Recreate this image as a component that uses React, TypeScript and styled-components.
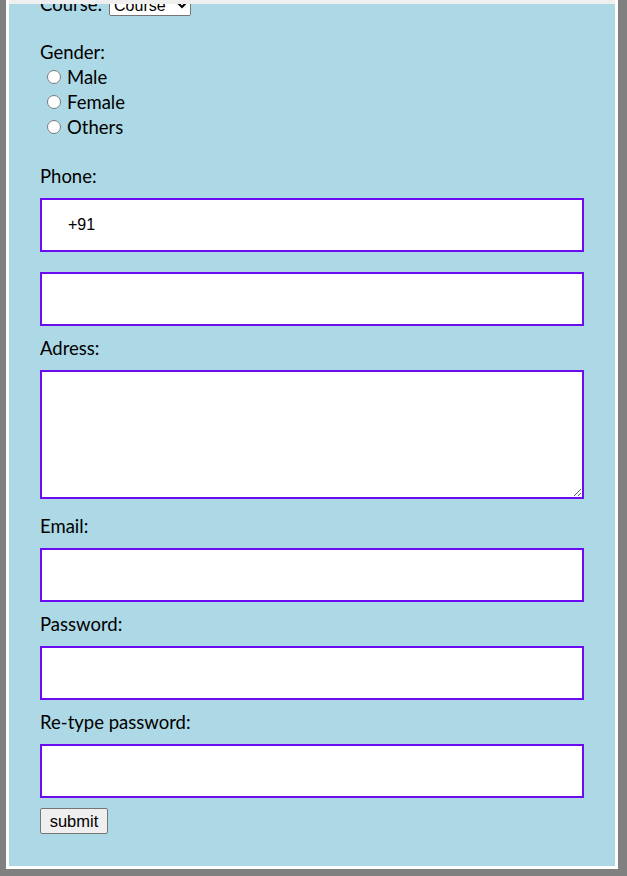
import React from "react";
import styled, { createGlobalStyle } from "styled-components";

const GlobalStyle = createGlobalStyle`
  html, body {
    margin: 0;
    padding: 0;
  }
  body {
    background: #808080;
    font-family: "Lato", "Noto Sans", sans-serif;
    overflow: hidden;
  }
`;

const Page = styled.div`
  padding: 0 9px 7px 6px;
`;

const TopShade = styled.div`
  position: fixed;
  top: 0;
  left: 9px;
  width: 606px;
  height: 4px;
  background: #efefef;
`;

const Card = styled.form`
  margin-top: -11px;
  background: #add8e6;
  border: 3px solid #ffffff;
  padding: 0 31px 32px 31px;
  display: flex;
  flex-direction: column;
  align-items: flex-start;
  color: #000;
`;

const Line = styled.div<{ $top?: number }>`
  font-size: 18.5px;
  line-height: 24px;
  height: 24px;
  margin-top: ${(p) => p.$top ?? 0}px;
  white-space: nowrap;
`;

const CourseSelect = styled.select`
  font-family: "Liberation Sans", Arial, sans-serif;
  font-size: 16px;
  width: 82px;
  margin-left: 7px;
  vertical-align: baseline;
`;

const RadioRow = styled.label`
  display: flex;
  align-items: center;
  height: 25px;
  font-size: 18.5px;
  padding-left: 2px;
`;

const Radio = styled.input`
  margin: 0 6px 0 5px;
  width: 14px;
  height: 14px;
`;

const Field = styled.input<{ $mt?: number; $mb?: number }>`
  box-sizing: border-box;
  width: 100%;
  height: 54px;
  border: 2px solid #6c0cf0;
  background: #fff;
  margin: ${(p) => p.$mt ?? 10}px 0 ${(p) => p.$mb ?? 10}px 0;
  padding: 0 0 0 26px;
  font-family: "Liberation Sans", Arial, sans-serif;
  font-size: 16px;
  color: #000;
  outline: none;
`;

const Area = styled.textarea`
  box-sizing: border-box;
  display: block;
  width: 100%;
  height: 129px;
  border: 2px solid #6c0cf0;
  background: #fff;
  margin: 10px 0 15px 0;
  padding: 4px;
  font-family: "Liberation Sans", Arial, sans-serif;
  font-size: 16px;
  outline: none;
`;

const Submit = styled.button`
  box-sizing: border-box;
  height: 26px;
  width: 68px;
  padding: 0;
  font-family: "Liberation Sans", Arial, sans-serif;
  font-size: 16.5px;
  color: #000;
  background: #efefef;
  border: 1px solid #767676;
  border-radius: 2px;
`;

export default function App() {
  return (
    <>
      <GlobalStyle />
      <Page>
        <Card onSubmit={(e) => e.preventDefault()}>
          <Line>
            Course:
            <CourseSelect defaultValue="Course">
              <option>Course</option>
            </CourseSelect>
          </Line>
          <Line $top={24}>Gender:</Line>
          <RadioRow>
            <Radio type="radio" name="gender" />
            Male
          </RadioRow>
          <RadioRow>
            <Radio type="radio" name="gender" />
            Female
          </RadioRow>
          <RadioRow>
            <Radio type="radio" name="gender" />
            Others
          </RadioRow>
          <Line $top={25}>Phone:</Line>
          <Field type="text" defaultValue="+91" />
          <Field type="text" />
          <Line>Adress:</Line>
          <Area />
          <Line>Email:</Line>
          <Field type="email" />
          <Line>Password:</Line>
          <Field type="password" />
          <Line>Re-type password:</Line>
          <Field type="password" />
          <Submit type="submit">submit</Submit>
        </Card>
      </Page>
      <TopShade />
    </>
  );
}
